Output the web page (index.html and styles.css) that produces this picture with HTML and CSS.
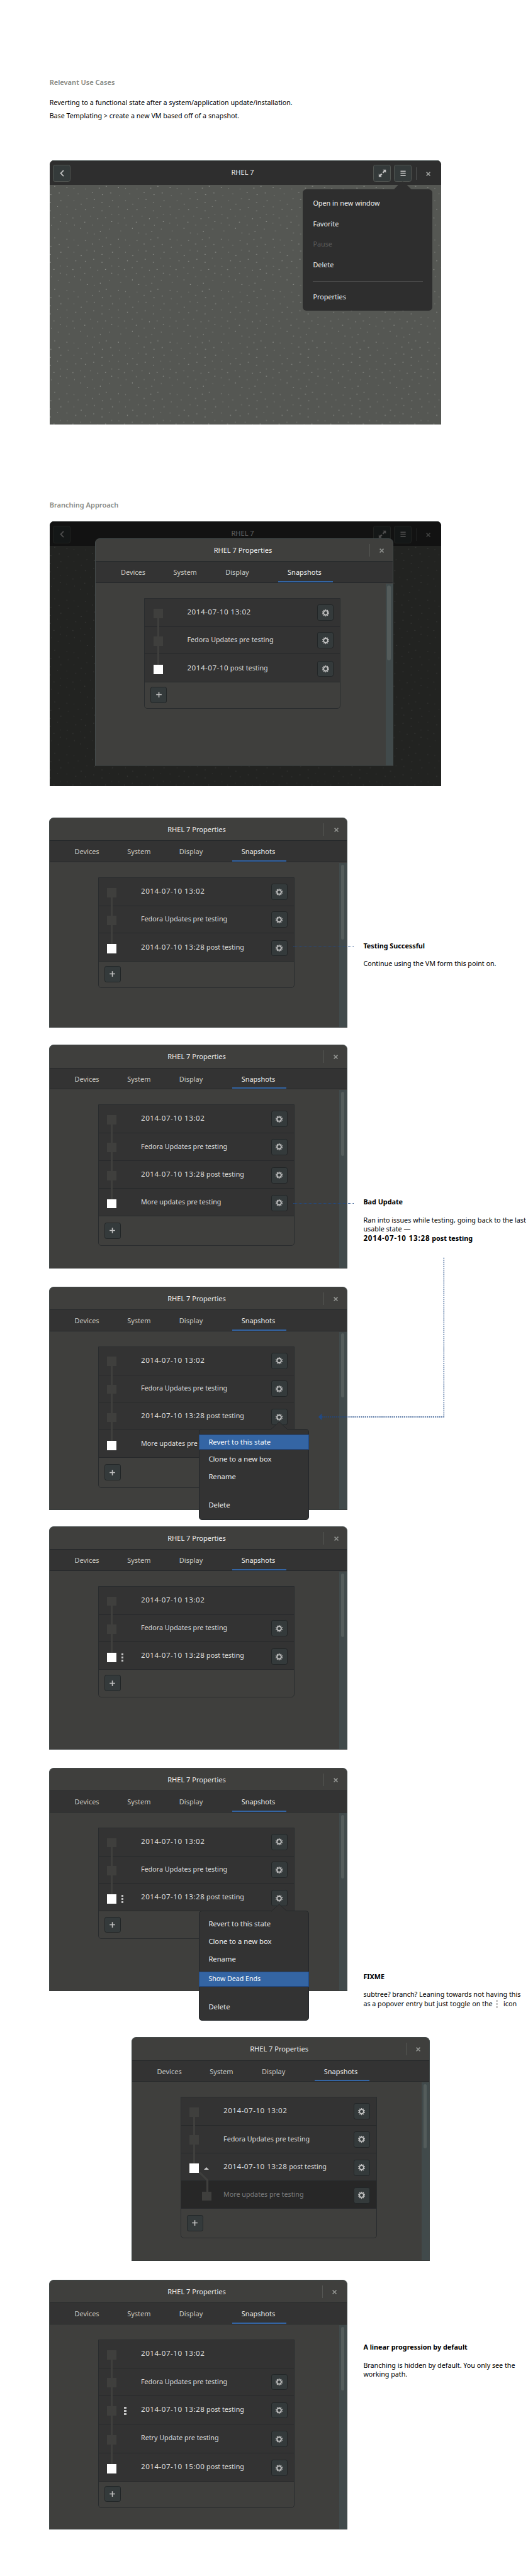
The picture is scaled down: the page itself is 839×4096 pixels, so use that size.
FILE: index.html
```html
<!DOCTYPE html>
<html lang="en">
<head>
<meta charset="utf-8">
<title>Boxes snapshots</title>
<link rel="stylesheet" href="styles.css">
</head>
<body>
<svg class="defs" aria-hidden="true">
  <symbol id="gear" viewBox="0 0 16 16"><circle cx="8" cy="8" r="4.1" fill="none" stroke="currentColor" stroke-width="2.2"/><circle cx="8" cy="8" r="5.9" fill="none" stroke="currentColor" stroke-width="1.9" pathLength="20" stroke-dasharray="1 1" stroke-dashoffset="-.5"/></symbol>
  <symbol id="plus" viewBox="0 0 16 16"><path d="M8 2.7v10.6M2.7 8h10.6" fill="none" stroke="currentColor" stroke-width="1.9"/></symbol>
  <symbol id="close" viewBox="0 0 16 16"><path d="M4.4 4.4l7.2 7.2M11.6 4.4l-7.2 7.2" fill="none" stroke="currentColor" stroke-width="2.1"/></symbol>
  <symbol id="back" viewBox="0 0 16 16"><path d="M11 2.4L5.6 8l5.4 5.6" fill="none" stroke="currentColor" stroke-width="2.3"/></symbol>
  <symbol id="lines" viewBox="0 0 16 16"><path d="M3 3h10v2H3zM3 7h10v2H3zM3 11h10v2H3z" fill="currentColor"/></symbol>
  <symbol id="expand" viewBox="0 0 16 16"><path d="M9 1h6v6l-2-2-3 3-2-2 3-3zM7 15H1V9l2 2 3-3 2 2-3 3z" fill="currentColor"/></symbol>
  <symbol id="tip" viewBox="0 0 36 17"><path d="M0 17L15.5 1.5Q18 0 20.5 1.5L36 17z" fill="#2e2e2e"/></symbol>
  <symbol id="smalltip" viewBox="0 0 31 16"><path d="M0 15L15.5 1 31 15v1H0z" fill="#333"/><path d="M0 15L15.5 1 31 15" fill="none" stroke="#23272a"/></symbol>
</svg>

<main class="page">
  <section class="intro">
    <h2>Relevant Use Cases</h2>
    <p>Reverting to a functional state after a system/application update/installation.</p>
    <p>Base Templating &gt; create a new VM based off of a snapshot.</p>
  </section>

  <section class="stage stage-a">
    <div class="window">
      <header class="bar">
        <button class="wbtn"><svg><use href="#back"/></svg></button>
        <span class="bar-title">RHEL 7</span>
        <button class="wbtn"><svg><use href="#expand"/></svg></button>
        <button class="wbtn"><svg><use href="#lines"/></svg></button>
        <i class="sep"></i>
        <svg class="x"><use href="#close"/></svg>
      </header>
      <svg class="screen"><defs><pattern id="dots" width="81.92" height="81.92" patternUnits="userSpaceOnUse"><g id="specks" transform="scale(.8192)" fill="none" stroke-width="1.2" stroke-linecap="square"><path stroke="#b4b6b0" d="M9.7 2.7h.1M33.3 5.3h.1M96 6.3h.1M83 14.7h.1M18.3 15.7h.1M2.3 19h.1M86.7 28.3h.1M21.7 30.7h.1M61 37.3h.1M1.3 34.7h.1M85.3 44.3h.1M50.7 47.3h.1M69.3 48.3h.1M1.3 50.3h.1M8.3 64h.1M45 64.3h.1M93.3 65.7h.1M20.3 71.3h.1M68 72.3h.1M60.3 84.3h.1M72.7 93.3h.1M98 90.7h.1"/><path stroke="#8f918b" d="M47 7h.1M69.3 8h.1M55 17.3h.1M35.7 21h.1M72 26.7h.1M47 30.7h.1M15.3 42h.1M33.3 42.7h.1M20.3 57.3h.1M34 58h.1M60 60.7h.1M79 60.7h.1M32.7 74.3h.1M48 78h.1M83 78h.1M3 78.3h.1M16.3 85.7h.1M37.7 89.3h.1M86.7 95.3h.1"/></g></pattern></defs><rect width="100%" height="100%" fill="url(#dots)"/></svg>
    </div>
    <div class="menu menu-main">
      <svg class="tip"><use href="#tip"/></svg>
      <span>Open in new window</span>
      <span>Favorite</span>
      <span class="off">Pause</span>
      <span>Delete</span>
      <hr>
      <span>Properties</span>
    </div>
  </section>

  <h2 class="second">Branching Approach</h2>

  <section class="stage stage-b">
    <div class="window shaded">
      <header class="bar">
        <button class="wbtn"><svg><use href="#back"/></svg></button>
        <span class="bar-title">RHEL 7</span>
        <button class="wbtn"><svg><use href="#expand"/></svg></button>
        <button class="wbtn"><svg><use href="#lines"/></svg></button>
        <i class="sep"></i>
        <svg class="x"><use href="#close"/></svg>
      </header>
      <svg class="screen"><rect width="100%" height="100%" fill="url(#dots)"/></svg>
    </div>
    <article class="dialog over">
      <header class="head"><span class="title">RHEL 7 Properties</span><i class="sep"></i><svg class="x"><use href="#close"/></svg></header>
      <nav class="tabs"><a>Devices</a><a>System</a><a>Display</a><a class="on">Snapshots</a></nav>
      <div class="body">
        <ul class="list f9">
          <li><b class="node link"></b><span><time>2014-07-10 13:02</time></span><button class="btn"><svg><use href="#gear"/></svg></button></li>
          <li><b class="node link"></b><span>Fedora Updates pre testing</span><button class="btn"><svg><use href="#gear"/></svg></button></li>
          <li class="h55"><b class="node now"></b><span><time>2014-07-10</time> post testing</span><button class="btn"><svg><use href="#gear"/></svg></button></li>
          <li class="foot"><button class="btn"><svg><use href="#plus"/></svg></button></li>
        </ul>
        <div class="scroll long"><i></i></div>
      </div>
    </article>
  </section>

  <section class="step s3">
    <article class="dialog">
      <header class="head"><span class="title">RHEL 7 Properties</span><i class="sep"></i><svg class="x"><use href="#close"/></svg></header>
      <nav class="tabs"><a>Devices</a><a>System</a><a>Display</a><a class="on">Snapshots</a></nav>
      <div class="body">
        <ul class="list f9">
          <li><b class="node link"></b><span><time>2014-07-10 13:02</time></span><button class="btn"><svg><use href="#gear"/></svg></button></li>
          <li><b class="node link"></b><span>Fedora Updates pre testing</span><button class="btn"><svg><use href="#gear"/></svg></button></li>
          <li class="h55"><b class="node now"></b><span><time>2014-07-10 13:28</time> post testing</span><button class="btn"><svg><use href="#gear"/></svg></button></li>
          <li class="foot"><button class="btn"><svg><use href="#plus"/></svg></button></li>
        </ul>
        <div class="scroll long"><i></i></div>
      </div>
    </article>
    <aside class="note">
      <h3>Testing Successful</h3>
      <p>Continue using the VM form this point on.</p>
    </aside>
    <i class="lead"></i>
  </section>

  <section class="step s4">
    <article class="dialog">
      <header class="head"><span class="title">RHEL 7 Properties</span><i class="sep"></i><svg class="x"><use href="#close"/></svg></header>
      <nav class="tabs"><a>Devices</a><a>System</a><a>Display</a><a class="on">Snapshots</a></nav>
      <div class="body">
        <ul class="list f13">
          <li><b class="node link"></b><span><time>2014-07-10 13:02</time></span><button class="btn"><svg><use href="#gear"/></svg></button></li>
          <li><b class="node link"></b><span>Fedora Updates pre testing</span><button class="btn"><svg><use href="#gear"/></svg></button></li>
          <li><b class="node link"></b><span><time>2014-07-10 13:28</time> post testing</span><button class="btn"><svg><use href="#gear"/></svg></button></li>
          <li><b class="node now"></b><span>More updates pre testing</span><button class="btn"><svg><use href="#gear"/></svg></button></li>
          <li class="foot"><button class="btn"><svg><use href="#plus"/></svg></button></li>
        </ul>
        <div class="scroll"><i></i></div>
      </div>
    </article>
    <aside class="note">
      <h3>Bad Update</h3>
      <p class="wide">Ran into issues while testing, going back to the last<br>usable state —<br><strong><time>2014-07-10 13:28</time> post testing</strong></p>
    </aside>
    <i class="lead"></i>
  </section>

  <section class="step s5">
    <article class="dialog">
      <header class="head"><span class="title">RHEL 7 Properties</span><i class="sep"></i><svg class="x"><use href="#close"/></svg></header>
      <nav class="tabs"><a>Devices</a><a>System</a><a>Display</a><a class="on">Snapshots</a></nav>
      <div class="body">
        <ul class="list f13">
          <li><b class="node link"></b><span><time>2014-07-10 13:02</time></span><button class="btn"><svg><use href="#gear"/></svg></button></li>
          <li><b class="node link"></b><span>Fedora Updates pre testing</span><button class="btn"><svg><use href="#gear"/></svg></button></li>
          <li><b class="node link"></b><span><time>2014-07-10 13:28</time> post testing</span><button class="btn"><svg><use href="#gear"/></svg></button></li>
          <li><b class="node now"></b><span class="cut">More updates pre</span></li>
          <li class="foot"><button class="btn"><svg><use href="#plus"/></svg></button></li>
        </ul>
        <div class="scroll"><i></i></div>
      </div>
    </article>
    <div class="menu menu-row">
      <svg class="tip"><use href="#smalltip"/></svg>
      <span class="hot">Revert to this state</span>
      <span>Clone to a new box</span>
      <span>Rename</span>
      <span class="last">Delete</span>
    </div>
    <svg class="route" viewBox="0 0 245 317"><path d="M243.5 1v309H6" fill="none" stroke="#204a87" stroke-width="1.8" stroke-dasharray="2.4 1.6"/><path d="M0 310l6.5-6.5v13z" fill="#204a87"/></svg>
  </section>

  <section class="step s6">
    <article class="dialog">
      <header class="head"><span class="title">RHEL 7 Properties</span><i class="sep"></i><svg class="x"><use href="#close"/></svg></header>
      <nav class="tabs"><a>Devices</a><a>System</a><a>Display</a><a class="on">Snapshots</a></nav>
      <div class="body">
        <ul class="list">
          <li><b class="node link"></b><span><time>2014-07-10 13:02</time></span></li>
          <li><b class="node link"></b><span>Fedora Updates pre testing</span><button class="btn"><svg><use href="#gear"/></svg></button></li>
          <li><b class="node now"></b><i class="more"></i><span><time>2014-07-10 13:28</time> post testing</span><button class="btn"><svg><use href="#gear"/></svg></button></li>
          <li class="foot"><button class="btn"><svg><use href="#plus"/></svg></button></li>
        </ul>
        <div class="scroll"><i></i></div>
      </div>
    </article>
  </section>

  <section class="step s7">
    <article class="dialog">
      <header class="head"><span class="title">RHEL 7 Properties</span><i class="sep"></i><svg class="x"><use href="#close"/></svg></header>
      <nav class="tabs"><a>Devices</a><a>System</a><a>Display</a><a class="on">Snapshots</a></nav>
      <div class="body">
        <ul class="list">
          <li><b class="node link"></b><span><time>2014-07-10 13:02</time></span><button class="btn"><svg><use href="#gear"/></svg></button></li>
          <li><b class="node link"></b><span>Fedora Updates pre testing</span><button class="btn"><svg><use href="#gear"/></svg></button></li>
          <li><b class="node now"></b><i class="more"></i><span><time>2014-07-10 13:28</time> post testing</span><button class="btn"><svg><use href="#gear"/></svg></button></li>
          <li class="foot"><button class="btn"><svg><use href="#plus"/></svg></button></li>
        </ul>
        <div class="scroll"><i></i></div>
      </div>
    </article>
    <div class="menu menu-row tall">
      <svg class="tip"><use href="#smalltip"/></svg>
      <span>Revert to this state</span>
      <span>Clone to a new box</span>
      <span>Rename</span>
      <span class="hot">Show Dead Ends</span>
      <span class="last">Delete</span>
    </div>
    <aside class="note">
      <h3>FIXME</h3>
      <p>subtree? branch? Leaning towards not having this<br>as a popover entry but just toggle on the <i class="more inline"></i>icon</p>
    </aside>
  </section>

  <section class="step s8">
    <article class="dialog">
      <header class="head"><span class="title">RHEL 7 Properties</span><i class="sep"></i><svg class="x"><use href="#close"/></svg></header>
      <nav class="tabs"><a>Devices</a><a>System</a><a>Display</a><a class="on">Snapshots</a></nav>
      <div class="body">
        <ul class="list f13">
          <li><b class="node link"></b><span><time>2014-07-10 13:02</time></span><button class="btn"><svg><use href="#gear"/></svg></button></li>
          <li><b class="node link"></b><span>Fedora Updates pre testing</span><button class="btn"><svg><use href="#gear"/></svg></button></li>
          <li><b class="node now"></b><i class="up"></i><svg class="branch" viewBox="0 0 30 38"><path d="M1 0L16.5 15.500V38" fill="none" stroke="#3f3f3d" stroke-width="4"/></svg><span><time>2014-07-10 13:28</time> post testing</span><button class="btn"><svg><use href="#gear"/></svg></button></li>
          <li class="dead"><b class="node"></b><span>More updates pre testing</span><button class="btn"><svg><use href="#gear"/></svg></button></li>
          <li class="foot"><button class="btn"><svg><use href="#plus"/></svg></button></li>
        </ul>
        <div class="scroll"><i></i></div>
      </div>
    </article>
  </section>

  <section class="step s9">
    <article class="dialog">
      <header class="head"><span class="title">RHEL 7 Properties</span><i class="sep"></i><svg class="x"><use href="#close"/></svg></header>
      <nav class="tabs"><a>Devices</a><a>System</a><a>Display</a><a class="on">Snapshots</a></nav>
      <div class="body">
        <ul class="list f9">
          <li><b class="node link"></b><span><time>2014-07-10 13:02</time></span></li>
          <li><b class="node link"></b><span>Fedora Updates pre testing</span><button class="btn"><svg><use href="#gear"/></svg></button></li>
          <li class="h56"><b class="node link"></b><i class="more far"></i><span><time>2014-07-10 13:28</time> post testing</span><button class="btn"><svg><use href="#gear"/></svg></button></li>
          <li class="h56"><b class="node link"></b><span>Retry Update pre testing</span><button class="btn"><svg><use href="#gear"/></svg></button></li>
          <li class="h55"><b class="node now"></b><span><time>2014-07-10 15:00</time> post testing</span><button class="btn"><svg><use href="#gear"/></svg></button></li>
          <li class="foot"><button class="btn"><svg><use href="#plus"/></svg></button></li>
        </ul>
        <div class="scroll"><i></i></div>
      </div>
    </article>
    <aside class="note">
      <h3>A linear progression by default</h3>
      <p>Branching is hidden by default. You only see the<br>working path.</p>
    </aside>
  </section>
</main>
</body>
</html>
```

FILE: styles.css
```css
/* 1rem = 10 design units */
html { font-size: 8.192px; }
* { box-sizing: border-box; }
body { margin: 0; background: #fff; color: #000; font-family: "Noto Sans", "Open Sans", sans-serif; font-size: 1.31rem; }
h2, h3, p, ul { margin: 0; padding: 0; font-weight: 400; }
button { padding: 0; font: inherit; }
svg { display: block; }
.defs { position: absolute; width: 0; height: 0; }

.page { height: 500rem; padding: 15rem 0 0 9.6rem; overflow: hidden; }

h2 { font-size: 1.35rem; font-weight: 600; line-height: 2rem; color: #888a85; }
.intro { height: 16.1rem; }
.intro h2 { margin-bottom: 1.65rem; }
.intro p { line-height: 2.58rem; white-space: nowrap; }
.second { margin-top: 14.67rem; margin-bottom: 2.13rem; }

/* machine window */
.stage { position: relative; width: 76rem; height: 51.3rem; }
.stage-b { height: 57.5rem; }
.window { position: relative; height: 51.3rem; display: flex; flex-direction: column; border-radius: .8rem .8rem 0 0; overflow: hidden; background: #555753; }
.shaded { height: 51.35rem; }
.shaded::after { content: ""; position: absolute; inset: 0; background: rgba(0, 0, 0, .6); }
.bar { display: flex; height: 4.8rem; padding: .7rem 1.7rem 0 .7rem; background: #2e2e2e; border-top: .1rem solid #3b4544; }
.bar-title { flex: 1; padding-left: 8rem; text-align: center; color: #eee; font-size: 1.35rem; line-height: 2.95rem; }
.wbtn { width: 3.4rem; height: 3.4rem; display: grid; place-items: center; border: 1px solid #515551; border-radius: .4rem; background: #343a3a; color: #bebebe; }
.wbtn + .wbtn { margin-left: .6rem; }
.wbtn svg { width: 1.6rem; height: 1.6rem; }
.bar .sep { width: 1px; height: 2.5rem; margin: .5rem 1.5rem 0 .85rem; background: #4d4f4e; }
.x { width: 1.6rem; height: 1.6rem; color: #999b98; }
.bar .x { margin-top: 1rem; }
.screen { width: 100%; flex: 1; }

/* popovers */
.menu { position: absolute; display: flex; flex-direction: column; color: #eee; white-space: nowrap; }
.menu .tip { position: absolute; }
.menu-main { left: 49.17rem; top: 5.7rem; width: 25.15rem; height: 23.5rem; padding: .65rem 1.85rem 0 1.95rem; border-radius: .7rem; background: #2e2e2e; font-size: 1.32rem; line-height: 4rem; }
.menu-main .tip { left: 17.5rem; top: -1.65rem; width: 3.6rem; height: 1.7rem; }
.menu-main .off { color: #5c5c5c; }
.menu-main hr { width: 100%; height: .2rem; margin: 1.1rem 0 .9rem; border: 0; background: #4a4a4a; }
.menu-row { left: 29.1rem; top: 27.57rem; width: 21.35rem; height: 17.7rem; padding: 1rem 0 0; border: 1px solid #23272a; border-radius: .6rem; background: #333; font-size: 1.37rem; line-height: 3.45rem; }
.menu-row .tip { left: 13.9rem; top: -1.5rem; width: 3.1rem; height: 1.6rem; }
.menu-row span { padding-left: 1.75rem; }
.menu-row .hot { height: 2.94rem; margin: 0 -1px .15rem; border: 1px solid #204a87; background: #3465a4; color: #fff; line-height: 2.6rem; padding-left: 1.75rem; }
.menu-row .last { margin-top: 1.95rem; }
.menu-row.tall { top: 27.79rem; height: 21.26rem; padding-top: .65rem; }
.tall .hot { margin: .7rem -1px 0; font-size: 1.3rem; }
.tall .last { margin-top: 2.2rem; }

/* properties dialog */
.dialog { width: 57.9rem; display: flex; flex-direction: column; border: 1px solid #434a4a; border-bottom-color: #373a3a; border-radius: .9rem .9rem 0 0; background: #3f3f3d; overflow: hidden; }
.over { position: absolute; left: 8.85rem; top: 3.3rem; height: 44.2rem; }
.head { flex: none; display: flex; height: 4.3rem; color: #eee; }
.title { width: var(--sep, 53.1rem); padding-left: calc(57.1rem - var(--sep, 53.1rem)); text-align: center; font-size: 1.35rem; line-height: 4.3rem; }
.head .sep { width: 1px; height: 2.45rem; margin: .95rem 1.5rem 0 0; background: #555653; }
.head .x { margin-top: 1.45rem; color: #8f918e; }
.tabs { flex: none; display: flex; height: 4.25rem; padding-left: 2.2rem; border: solid #25282a; border-width: .1rem 0; background: #333; color: #c9c9c4; font-size: 1.34rem; line-height: 4.05rem; }
.tabs a { width: 10.1rem; text-align: center; }
.tabs .on { width: 10.6rem; margin-left: 2.9rem; padding-right: .4rem; border-bottom: .3rem solid #3465a4; color: #eee; }
.body { flex: 1; display: flex; padding: 2.95rem 0 0 9.42rem; }
.scroll { width: 1.45rem; margin: -2.85rem 0 0 auto; padding: .35rem 0 0 .35rem; background: #414a4b; }
.scroll i { display: block; width: .65rem; height: 12.4rem; border-radius: .4rem; background: #545c5b; }
.scroll.long i { height: 14.5rem; }

.list { align-self: flex-start; width: 38.1rem; border: 1px solid #292c2e; border-radius: 0 0 .6rem .6rem; list-style: none; color: #dedede; }
.list li { position: relative; display: flex; height: 5.4rem; padding: 1.1rem 1.26rem 0 1.66rem; border-bottom: 1px solid #27292b; background: #333; }
.list li:nth-child(1) { height: 5.45rem; }
.list li:nth-child(2) { height: 5.3rem; padding-top: 1.05rem; }
.list li:nth-child(n+3) { padding-top: 1.25rem; }
.list li.h55 { height: 5.5rem; }
.list li.h56 { height: 5.6rem; }
.list li span { position: absolute; left: 8.2rem; line-height: 2.95rem; white-space: nowrap; }
.list li:nth-child(n+3) span { line-height: 2.75rem; }
.list li .btn { margin-left: auto; }
.btn { width: 3.15rem; height: 3.15rem; display: grid; place-items: center; border: 1px solid #222627; border-radius: .4rem; background: #343a3b; color: #c3c3c3; }
.btn svg { width: 1.6rem; height: 1.6rem; }
time { font-size: 1.42rem; letter-spacing: .06rem; }
.node { position: relative; flex: none; width: 1.8rem; height: 1.8rem; margin-top: .8rem; background: #3f3f3d; z-index: 1; }
.link::after { content: ""; position: absolute; left: .7rem; top: 1.8rem; width: .4rem; height: 3.85rem; background: #3f3f3d; }
.now { background: #fff; }
.list li.foot { height: 5.25rem; padding: 1rem 0 0 1.1rem; border: 0; background: none; }
.list li.foot .btn { margin: 0; }
.list.f9 li.foot { height: 5rem; padding-top: .8rem; }
.list.f13 li.foot { height: 5.65rem; padding-top: 1.2rem; }
.more { width: .4rem; height: 1.6rem; margin: .9rem 0 0 .9rem; background: repeating-linear-gradient(#c3c3c3 0 .4rem, transparent .4rem .6rem); }
.more.far { margin-left: 1.5rem; }
.more.inline { display: inline-block; margin: 0 1.1rem 0 .3rem; vertical-align: middle; opacity: .85; }
.up { height: .5rem; margin: 1.5rem 0 0 1rem; border: solid transparent; border-width: 0 .5rem .5rem; border-bottom-color: #c3c3c3; }
.branch { position: absolute; left: 3.45rem; top: 3.75rem; width: 3rem; height: 3.8rem; z-index: 1; }
.list li.dead { padding-left: 4.05rem; background: #272727; color: #7c7c7c; }

/* steps */
.step { position: relative; display: flex; align-items: flex-start; margin-left: -.12rem; }
.note { margin-left: 3.1rem; line-height: 1.76rem; white-space: nowrap; }
.note h3 { margin-bottom: 1.76rem; font-size: 1.32rem; font-weight: 700; }
.note .wide { font-size: 1.32rem; }
.note time { font-size: 1.41rem; letter-spacing: .1rem; line-height: 1; }
.lead { position: absolute; left: 47.4rem; width: 11.7rem; border-top: .14rem dotted #204a87; }
.s3 { height: 44.1rem; }
.s3 .dialog { height: 40.75rem; --sep: 53.2rem; }
.s3 .note { padding-top: 24rem; }
.s3 .lead { top: 25.05rem; }
.s4 { height: 46.93rem; }
.s4 .dialog { height: 43.37rem; }
.s4 .note { padding-top: 29.65rem; }
.s4 .lead { top: 30.7rem; }
.s5 { height: 46.52rem; }
.s5 .dialog { height: 43.42rem; }
.route { position: absolute; left: 52.25rem; top: -5.65rem; width: 24.5rem; height: 31.7rem; }
.s6 { height: 46.88rem; }
.s6 .dialog { height: 43.37rem; --sep: 53.2rem; }
.s7 { height: 52.3rem; }
.s7 .dialog { height: 43.41rem; }
.s7 .note { padding-top: 39.65rem; }
.s8 { height: 47.1rem; padding-left: 16rem; }
.s8 .dialog { height: 43.42rem; }
.s9 .dialog { height: 48.42rem; --sep: 52.9rem; }
.s9 .note { padding-top: 12.2rem; }
```
